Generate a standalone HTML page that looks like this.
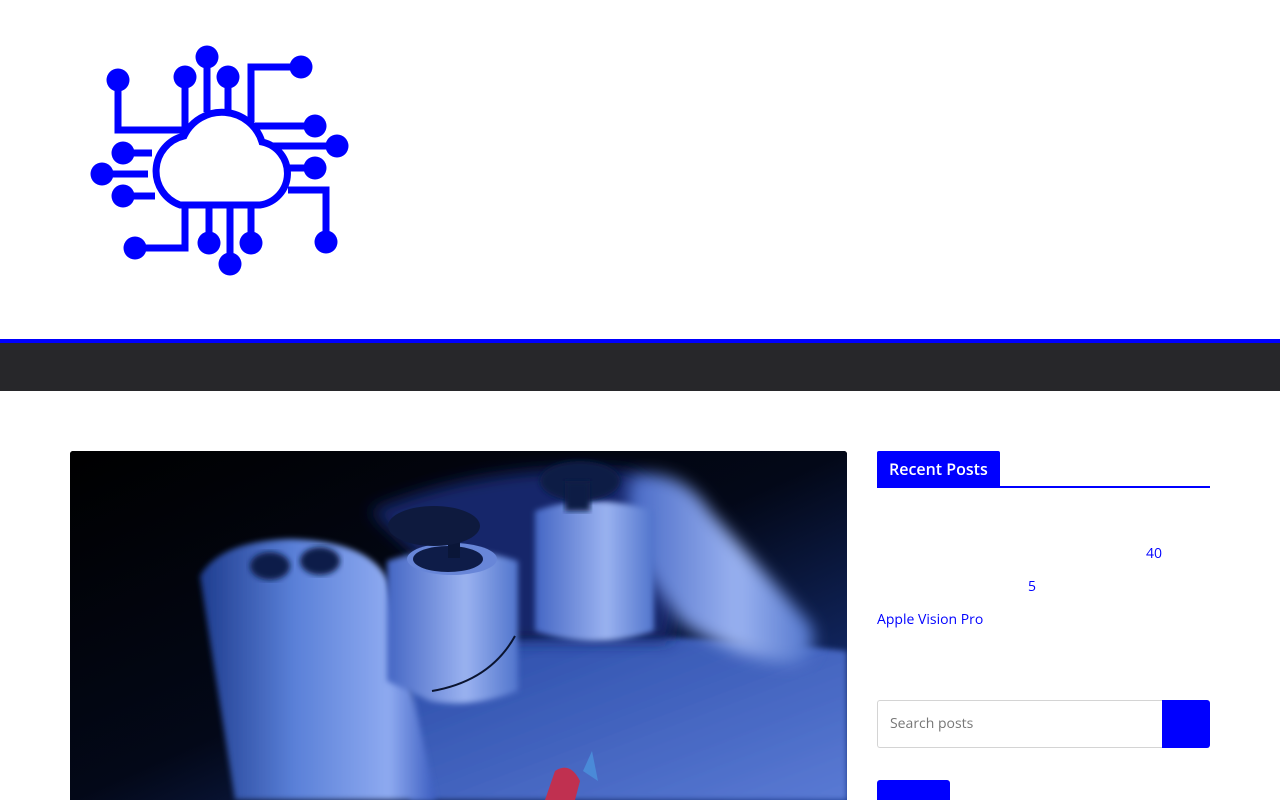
<!DOCTYPE html>
<html><head><meta charset="utf-8">
<style>
html,body{margin:0;padding:0;background:#fff;width:1280px;height:800px;overflow:hidden;font-family:"Open Sans","Liberation Sans","Noto Sans CJK SC",sans-serif}
.logo{position:absolute;left:0;top:0}
.topline{position:absolute;left:0;top:339px;width:1280px;height:4px;background:#0000ff}
.nav{position:absolute;left:0;top:343px;width:1280px;height:48px;background:#27272a}
.photo{position:absolute;left:70px;top:451px;width:777px;height:349px;border-radius:3px 3px 0 0;overflow:hidden;background:#000}
.title{position:absolute;left:877px;top:451px;height:36px;padding:0 12px;background:#0000ff;color:#fff;font-size:16px;font-weight:600;line-height:37px;border-radius:2px 2px 0 0}
.tline{position:absolute;left:877px;top:486px;width:333px;height:2px;background:#0000ff}
.lnk{position:absolute;color:#0000ff;font-size:14px;line-height:20px}
.search{position:absolute;left:877px;top:700px;width:285px;height:48px;border:1px solid #d4d4d4;border-right:none;border-radius:3px 0 0 3px;box-sizing:border-box;font-size:14px;color:#777;padding-left:12px;line-height:46px}
.sbtn{position:absolute;left:1162px;top:700px;width:48px;height:48px;background:#0000ff;border-radius:0 3px 3px 0}
.btm{position:absolute;left:877px;top:780px;width:73px;height:20px;background:#0000ff;border-radius:3px 3px 0 0}
</style></head><body>
<svg class="logo" width="400" height="300" viewBox="0 0 400 300">
<g stroke="#0000ff" stroke-width="7" fill="none">
<path d="M118 80V130H185"/><path d="M185 77V130"/><path d="M207 57V112"/><path d="M228 77V112"/>
<path d="M301 67H251V122"/><path d="M315 126H255"/><path d="M336 146H262"/><path d="M315 168H288"/>
<path d="M123 153H152"/><path d="M102 174H148"/><path d="M123 196H155"/>
<path d="M288 190H326V242"/><path d="M135 248H185V205"/><path d="M209 243V205"/><path d="M230 264V205"/><path d="M251 243V205"/>
</g>
<g fill="#0000ff">
<circle cx="118" cy="80" r="11.5"/><circle cx="185" cy="77" r="11.5"/><circle cx="207" cy="57" r="11.5"/><circle cx="228" cy="77" r="11.5"/>
<circle cx="301" cy="67" r="11.5"/><circle cx="315" cy="126" r="11.5"/><circle cx="337" cy="146" r="11.5"/><circle cx="315" cy="168" r="11.5"/>
<circle cx="123" cy="153" r="11.5"/><circle cx="102" cy="174" r="11.5"/><circle cx="123" cy="196" r="11.5"/>
<circle cx="326" cy="242" r="11.5"/><circle cx="135" cy="248" r="11.5"/><circle cx="209" cy="243" r="11.5"/><circle cx="230" cy="264" r="11.5"/><circle cx="251" cy="243" r="11.5"/>
</g>
<path d="M180 205H260A32 32 0 0 0 262 142A42 42 0 0 0 184 136A36 36 0 0 0 180 205Z" fill="#fff" stroke="#0000ff" stroke-width="7"/>
</svg>
<div class="topline"></div><div class="nav"></div>
<div class="photo">
<svg width="777" height="349" viewBox="0 0 777 349">
<defs>
<linearGradient id="bg" x1="0" y1="0" x2="1" y2="1"><stop offset="0" stop-color="#000"/><stop offset=".5" stop-color="#030818"/><stop offset="1" stop-color="#1a3a90"/></linearGradient>
<linearGradient id="grip" x1="0" y1="0" x2="1" y2="0"><stop offset="0" stop-color="#1e3c8e"/><stop offset=".4" stop-color="#5a80d8"/><stop offset=".8" stop-color="#8eaaf0"/><stop offset="1" stop-color="#3a5cc0"/></linearGradient>
<linearGradient id="cyl" x1="0" y1="0" x2="1" y2="0"><stop offset="0" stop-color="#4466c4"/><stop offset=".6" stop-color="#9ab2f0"/><stop offset="1" stop-color="#5074cc"/></linearGradient>
<linearGradient id="body" x1="0" y1="0" x2="1" y2="1"><stop offset="0" stop-color="#2a4ca8"/><stop offset="1" stop-color="#5a7ad4"/></linearGradient>
<filter id="b"><feGaussianBlur stdDeviation="3"/></filter>
<filter id="b2"><feGaussianBlur stdDeviation="8"/></filter>
</defs>
<rect width="777" height="349" fill="url(#bg)"/>
<path d="M340 200 Q500 170 777 200 V349 H340Z" fill="url(#body)" filter="url(#b)"/>
<path d="M300 60 Q420 10 560 20 L620 60 L600 190 L440 190 Z" fill="#14286a" filter="url(#b2)"/>
<path d="M560 25 Q610 15 640 60 L742 175 Q750 215 715 212 Q660 205 610 170 L555 90Z" fill="url(#cyl)" filter="url(#b2)"/>
<path d="M465 60 Q520 40 584 60 L584 180 Q525 200 465 180Z" fill="url(#cyl)" filter="url(#b)"/>
<ellipse cx="510" cy="30" rx="40" ry="20" fill="#0c1a44" filter="url(#b)"/>
<rect x="495" y="30" width="25" height="30" fill="#0c1a44" filter="url(#b)"/>
<path d="M130 125 Q150 90 220 88 Q300 90 318 130 L366 349 H165 L140 190Z" fill="url(#grip)" filter="url(#b)"/>
<ellipse cx="200" cy="115" rx="20" ry="14" fill="#0e1c48" filter="url(#b)"/>
<ellipse cx="250" cy="110" rx="20" ry="14" fill="#0e1c48" filter="url(#b)"/>
<path d="M317 110 Q380 88 448 110 L448 240 Q400 258 360 250 L317 230Z" fill="url(#cyl)" filter="url(#b)"/>
<ellipse cx="382" cy="108" rx="45" ry="16" fill="#6886d8"/>
<ellipse cx="378" cy="108" rx="35" ry="13" fill="#0e1c48"/>
<rect x="378" y="85" width="12" height="22" fill="#0a1638"/>
<ellipse cx="364" cy="75" rx="46" ry="20" fill="#0e1a3e"/>
<path d="M445 185 Q420 230 362 240" stroke="#0a1430" stroke-width="2" fill="none"/>
<path d="M475 349 L485 320 Q500 310 510 330 L505 349Z" fill="#c03050"/>
<path d="M513 320 L522 300 L528 330Z" fill="#4a8ad8"/>
</svg>
</div>
<div class="title">Recent Posts</div><div class="tline"></div>
<div class="lnk" style="left:1146px;top:544px">40</div>
<div class="lnk" style="left:1028px;top:577px">5</div>
<div class="lnk" style="left:877px;top:610px">Apple Vision Pro</div>
<div class="search">Search posts</div><div class="sbtn"></div>
<div class="btm"></div>
</body></html>
